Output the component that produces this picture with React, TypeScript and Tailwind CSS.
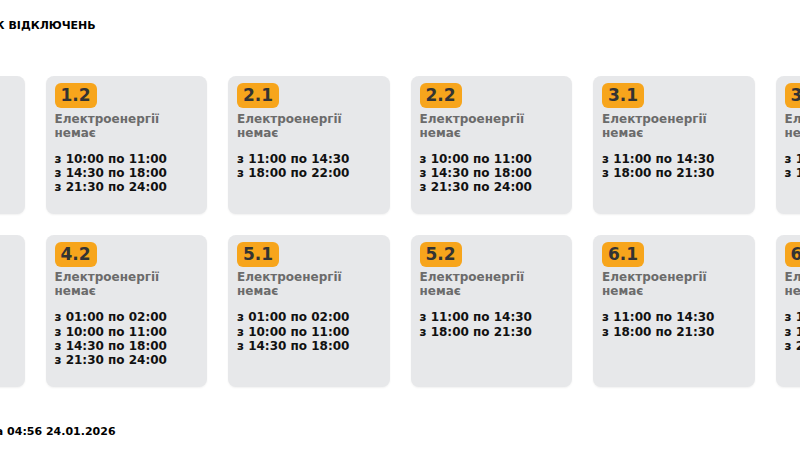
import React from "react";

type Queue = {
  id: string;
  slots: string[];
};

const rows: Queue[][] = [
  [
    { id: "1.1", slots: ["з 10:00 по 11:00", "з 14:30 по 18:00", "з 21:30 по 24:00"] },
    { id: "1.2", slots: ["з 10:00 по 11:00", "з 14:30 по 18:00", "з 21:30 по 24:00"] },
    { id: "2.1", slots: ["з 11:00 по 14:30", "з 18:00 по 22:00"] },
    { id: "2.2", slots: ["з 10:00 по 11:00", "з 14:30 по 18:00", "з 21:30 по 24:00"] },
    { id: "3.1", slots: ["з 11:00 по 14:30", "з 18:00 по 21:30"] },
    { id: "3.2", slots: ["з 11:00 по 14:30", "з 18:00 по 21:30"] },
  ],
  [
    { id: "4.1", slots: ["з 01:00 по 02:00", "з 10:00 по 11:00", "з 14:30 по 18:00"] },
    { id: "4.2", slots: ["з 01:00 по 02:00", "з 10:00 по 11:00", "з 14:30 по 18:00", "з 21:30 по 24:00"] },
    { id: "5.1", slots: ["з 01:00 по 02:00", "з 10:00 по 11:00", "з 14:30 по 18:00"] },
    { id: "5.2", slots: ["з 11:00 по 14:30", "з 18:00 по 21:30"] },
    { id: "6.1", slots: ["з 11:00 по 14:30", "з 18:00 по 21:30"] },
    { id: "6.2", slots: ["з 10:00 по 11:00", "з 14:30 по 18:00", "з 21:30 по 24:00"] },
  ],
];

const QueueCard: React.FC<{ queue: Queue }> = ({ queue }) => (
  <div className="flex flex-col items-start rounded-lg bg-[#e7e8ea] pl-[9px] pr-2 pt-[7px] pb-[19.5px] shadow-[0_1px_2px_rgba(0,0,0,0.06)]">
    <span className="rounded-md bg-[#f7a51c] px-[6px] py-[3px] text-[17px] font-bold leading-[19px] text-[#333]">
      {queue.id}
    </span>
    <div className="mt-[3.5px] text-[12px] font-bold leading-[14px] text-[#6b6b6b]">
      Електроенергії
      <br />
      немає
    </div>
    <ul className="mt-[12px] text-[12px] font-bold leading-[14.3px] text-[#111]">
      {queue.slots.map((s) => (
        <li key={s}>{s}</li>
      ))}
    </ul>
  </div>
);

export default function App() {
  return (
    <div className="h-[450px] w-[800px] overflow-hidden bg-white px-4 font-['DejaVu_Sans',sans-serif]">
      <div className="pt-[19px]">
        <h1 className="-ml-[59px] whitespace-nowrap text-[11px] font-bold uppercase leading-[14px] text-black">
          Графік відключень
        </h1>
      </div>

      <div className="mt-[43px] flex justify-center">
        <div className="grid shrink-0 grid-cols-[repeat(6,161.5px)] gap-[21px]">
          {rows.flat().map((q) => (
            <QueueCard key={q.id} queue={q} />
          ))}
        </div>
      </div>

      <p className="mt-[38px] -ml-[142px] whitespace-nowrap text-[11px] font-bold leading-[14px] text-black">
        Оновлено станом на 04:56 24.01.2026
      </p>
    </div>
  );
}
